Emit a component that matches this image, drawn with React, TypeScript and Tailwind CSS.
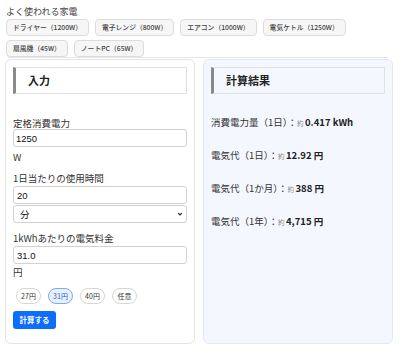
const presets = [
  "ドライヤー（1200W）",
  "電子レンジ（800W）",
  "エアコン（1000W）",
  "電気ケトル（1250W）",
  "扇風機（45W）",
  "ノートPC（65W）",
];

const prices = ["27円", "31円", "40円", "任意"];

const results = [
  { label: "消費電力量（1日）：", value: "0.417 kWh" },
  { label: "電気代（1日）：", value: "12.92 円" },
  { label: "電気代（1か月）：", value: "388 円" },
  { label: "電気代（1年）：", value: "4,715 円" },
];

function Heading({ children }: { children: React.ReactNode }) {
  return (
    <div className="flex h-[27px] items-center border border-[#e2e2e2] border-l-[3px] border-l-[#8a8a8a] pl-[12px] text-[11px] font-bold text-[#222]">
      {children}
    </div>
  );
}

export default function App() {
  return (
    <div className="h-[350px] w-[400px] overflow-hidden bg-white font-['Noto_Sans_CJK_JP',sans-serif] text-[#333]">
      <div className="px-[6px] pt-[5px]">
        <div className="text-[9px] leading-[13px] text-[#444]">よく使われる家電</div>
        <div className="mt-[1px] flex flex-wrap gap-x-[6px] gap-y-[4px] pr-[30px]">
          {presets.map((p) => (
            <button
              key={p}
              className="h-[17px] rounded-[4px] border border-[#dcdcdc] bg-[#f6f6f6] px-[6px] text-[6.8px] font-medium leading-none text-[#444]"
            >
              {p}
            </button>
          ))}
        </div>
        <div className="mx-[2px] mr-[6px] border-t border-[#e6e6e6]" />
      </div>

      <div className="mt-[1px] flex gap-[8px] pl-[5px]">
        <div className="h-[285px] w-[190px] rounded-[6px] border border-[#e4e4e4] bg-white px-[7px] pt-[7px]">
          <Heading>入力</Heading>

          <div className="mt-[23px] text-[9.5px] leading-[12px]">定格消費電力</div>
          <input
            readOnly
            value="1250"
            className="block h-[18px] w-full rounded-[3px] border border-[#d2d2d2] px-[2px] font-['Liberation_Sans',sans-serif] text-[9.5px] text-[#111] outline-none"
          />
          <div className="mt-[4px] text-[9.5px] leading-[12px]">W</div>

          <div className="mt-[9px] text-[9.5px] leading-[12px]">1日当たりの使用時間</div>
          <input
            readOnly
            value="20"
            className="mt-[2px] block h-[18px] w-full rounded-[3px] border border-[#d2d2d2] px-[3px] font-['Liberation_Sans',sans-serif] text-[9.5px] text-[#111] outline-none"
          />
          <div className="relative mt-[1px]">
            <select className="block h-[18px] w-full appearance-none rounded-[3px] border border-[#d2d2d2] bg-white px-[6px] text-[9.5px] text-[#111] outline-none">
              <option>分</option>
            </select>
            <svg
              className="pointer-events-none absolute right-[4px] top-[6px] h-[6px] w-[6px]"
              viewBox="0 0 10 10"
              fill="none"
              stroke="#222"
              strokeWidth={2}
            >
              <path d="M2 3.5l3 3 3-3" />
            </svg>
          </div>

          <div className="mt-[9px] text-[9.5px] leading-[12px]">1kWhあたりの電気料金</div>
          <input
            readOnly
            value="31.0"
            className="mt-[2px] block h-[18px] w-full rounded-[3px] border border-[#d2d2d2] px-[3px] font-['Liberation_Sans',sans-serif] text-[9.5px] text-[#111] outline-none"
          />
          <div className="mt-[2px] text-[9.5px] leading-[12px]">円</div>

          <div className="mt-[10px] flex gap-[7px] pl-[3px]">
            {prices.map((p) => (
              <button
                key={p}
                className={
                  p === "31円"
                    ? "h-[16px] w-[25px] rounded-full border border-[#7aaaf5] bg-[#e8f0fe] text-[7px] leading-none text-[#2a63c9]"
                    : "h-[16px] w-[25px] rounded-full border border-[#d6d6d6] bg-white text-[7px] leading-none text-[#333]"
                }
              >
                {p}
              </button>
            ))}
          </div>

          <button className="mt-[3px] h-[18px] w-[43px] rounded-[3px] bg-[#0d6efd] text-[7.5px] font-bold leading-none text-white">
            計算する
          </button>
        </div>

        <div className="h-[285px] w-[190px] rounded-[6px] border border-[#e2e7f0] bg-[#f4f7fe] px-[7px] pt-[7px]">
          <Heading>計算結果</Heading>
          <div className="mt-[22px] flex flex-col gap-[21px]">
            {results.map((r) => (
              <div key={r.label} className="h-[12px] text-[9.5px] leading-[12px] text-[#333]">
                {r.label}
                <span className="text-[6.5px] leading-[12px] text-[#888]">約 </span>
                <span className="text-[9.5px] font-bold leading-[12px] text-[#222]">{r.value}</span>
              </div>
            ))}
          </div>
        </div>
      </div>
    </div>
  );
}
